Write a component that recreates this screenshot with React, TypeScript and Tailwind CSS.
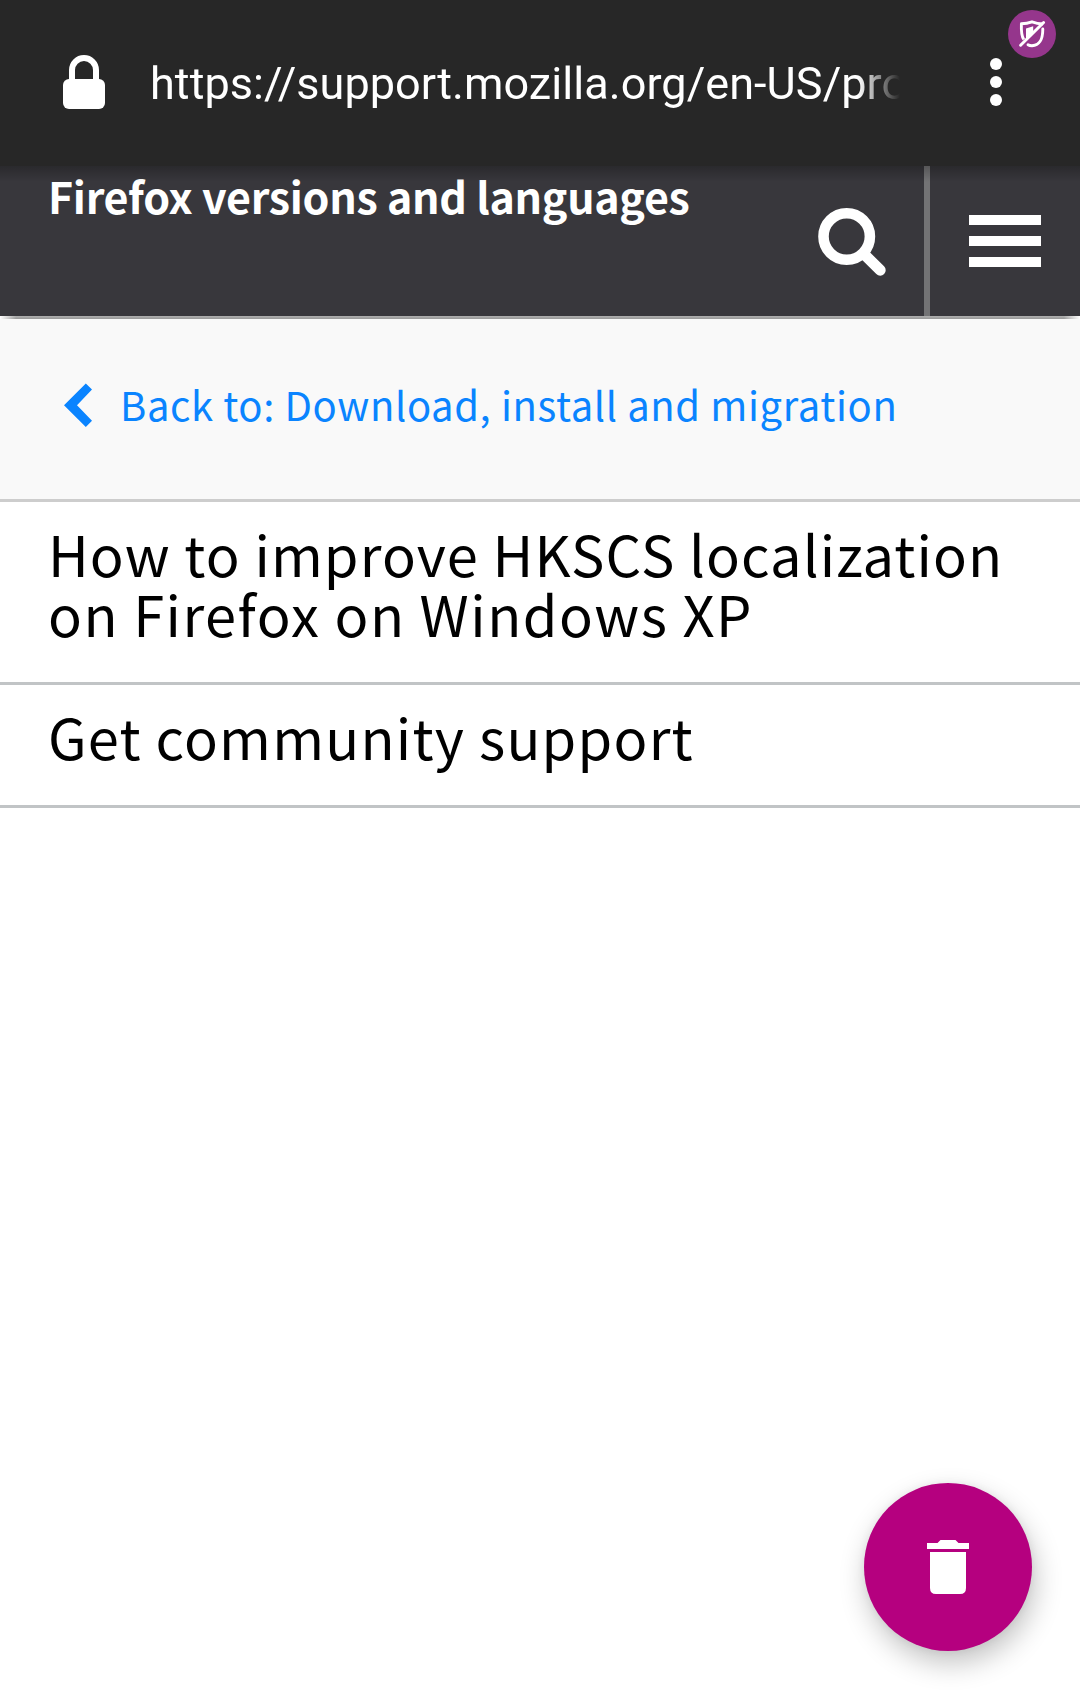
function LockIcon() {
  return (
    <svg width="42" height="54" viewBox="0 0 42 54" className="ml-[63px] shrink-0">
      <path d="M9 28V15a12 12 0 0 1 24 0v13" fill="none" stroke="#fff" strokeWidth="6" />
      <rect y="24" width="42" height="30" rx="6" fill="#fff" />
    </svg>
  );
}

function MenuDots() {
  return (
    <svg width="12" height="48" viewBox="0 0 12 48" className="ml-[90px] shrink-0">
      <circle cx="6" cy="6" r="6" fill="#fff" />
      <circle cx="6" cy="24" r="6" fill="#fff" />
      <circle cx="6" cy="42" r="6" fill="#fff" />
    </svg>
  );
}

function BlockedBadge() {
  return (
    <svg width="48" height="48" viewBox="0 0 48 48" className="absolute top-2.5 left-[1008px]">
      <circle cx="24" cy="24" r="24" fill="#95368c" />
      <path d="M15.8 29.5C13.2 26 13.2 19 13.4 13.8Q19 13.6 24 11.8Q29 13.6 35 14" fill="none" stroke="#fff" strokeWidth="2.9" strokeLinejoin="round" />
      <path d="M34.8 19C34.8 28 33 35 24 35.8Q21.5 35.8 20 34.8" fill="none" stroke="#fff" strokeWidth="2.9" strokeLinecap="round" />
      <path d="M18 18.5L25.2 16.3V22L18 29Z" fill="#fff" />
      <path d="M12.6 35.2L35.6 12.5" stroke="#fff" strokeWidth="3" strokeLinecap="round" />
    </svg>
  );
}

function SearchIcon() {
  return (
    <svg width="68" height="69" viewBox="0 0 68 69" className="absolute top-[42px] left-[818px]">
      <circle cx="28.7" cy="28.5" r="23.2" fill="none" stroke="#fff" strokeWidth="10.6" />
      <path d="M46 46.2L62.2 62.2" stroke="#fff" strokeWidth="11" strokeLinecap="round" />
    </svg>
  );
}

function ChevronLeft() {
  return (
    <svg width="28" height="44" viewBox="0 0 28 44" className="ml-16 shrink-0">
      <path d="M0 22.3L21.8 .5L28 6.5L13 22.3L28 37.8L21.8 44Z" fill="#0a84ff" />
    </svg>
  );
}

function TrashIcon() {
  return (
    <svg width="42" height="54" viewBox="0 0 42 54">
      <path d="M0 3H10.5L13.5 0H28.5L31.5 3H42V9H0ZM3 12H39V48Q39 54 33 54H9Q3 54 3 48Z" fill="#fff" />
    </svg>
  );
}

export default function App() {
  return (
    <div className="relative flex h-[1699px] w-[1080px] flex-col overflow-hidden bg-white font-['Noto_Sans_CJK_SC',sans-serif] text-black">
      <header className="relative z-10 flex h-[166px] shrink-0 items-center bg-[#272727] pb-0.5 font-['Roboto',sans-serif] text-white">
        <LockIcon />
        <div className="mt-1 ml-[45px] w-[750px] overflow-hidden text-[45px] leading-[60px] tracking-[0.06px] whitespace-nowrap [mask-image:linear-gradient(to_right,#000_708px,transparent_750px)]">
          https://support.mozilla.org/en-US/pro
        </div>
        <MenuDots />
        <BlockedBadge />
      </header>

      <nav className="relative flex h-[150px] shrink-0 bg-[#38373c] text-white">
        <div className="absolute inset-x-0 top-0 h-4 bg-linear-to-b from-black/25 to-transparent" />
        <h1 className="-mt-px ml-12 w-[876px] text-[43px] leading-[60px] font-bold tracking-[-0.3px]">
          Firefox versions and languages
        </h1>
        <SearchIcon />
        <div className="w-1.5 bg-[#737375]" />
        <div className="mt-[49px] ml-[39px] flex flex-col gap-[11px]">
          <div className="h-2.5 w-[72px] bg-white" />
          <div className="h-2.5 w-[72px] bg-white" />
          <div className="h-2.5 w-[72px] bg-white" />
        </div>
      </nav>
      <div className="h-[3px] shrink-0 bg-linear-to-b from-[#b0b0b0] to-[#989898] [mask-image:linear-gradient(to_right,transparent,#000_16px,#000_1064px,transparent)]" />

      <a className="flex h-[183px] shrink-0 items-center border-b-[3px] border-[#cdcdcd] bg-[#f9f9f9] pb-2 text-[40px] leading-[60px] tracking-[0.6px] text-[#0a84ff]">
        <ChevronLeft />
        <span className="mb-0.5 ml-7">Back to: Download, install and migration</span>
      </a>

      <ul className="text-[56px] leading-[60px]">
        <li className="flex h-[183px] flex-col border-b-[3px] border-[#c1c4c6] pt-[21px] pl-12">
          <span className="tracking-[1.1px]">How to improve HKSCS localization</span>
          <span className="tracking-[1.5px]">on Firefox on Windows XP</span>
        </li>
        <li className="h-[123px] border-b-[3px] border-[#c1c4c6] pt-[21px] pl-12 tracking-[1.22px]">
          Get community support
        </li>
      </ul>

      <button className="absolute top-[1483px] left-[864px] flex size-[168px] items-center justify-center rounded-full bg-[#b5007f] shadow-[3px_12px_28px_rgba(0,0,0,0.24),0_0_8px_rgba(0,0,0,0.06)]">
        <TrashIcon />
      </button>
    </div>
  );
}
